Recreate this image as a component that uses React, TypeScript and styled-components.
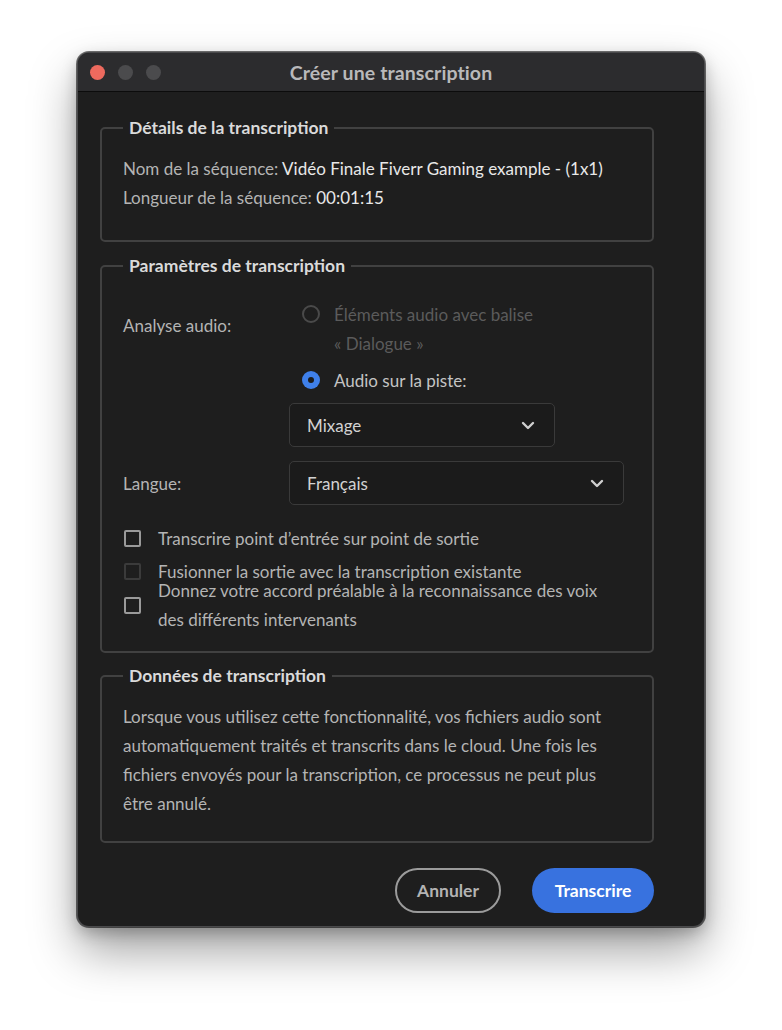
import { createGlobalStyle } from "styled-components";
import styled from "styled-components";

const GlobalStyle = createGlobalStyle`
	html, body {
		margin: 0;
		background: #ffffff;
	}
	body {
		font-family: Lato, "Liberation Sans", sans-serif;
		-webkit-font-smoothing: antialiased;
	}
	* {
		box-sizing: border-box;
	}
`;

const Stage = styled.div`
	width: 782px;
	height: 1030px;
	padding: 53px 0 0 78px;
	overflow: hidden;
`;

const Window = styled.div`
	width: 626px;
	height: 873px;
	background: #1e1e1e;
	border-radius: 11px;
	overflow: hidden;
	display: flex;
	flex-direction: column;
	box-shadow:
		0 0 0 1px #4a4a4c,
		0 0 0 2px rgba(0, 0, 0, 0.55),
		0 24px 48px rgba(0, 0, 0, 0.38),
		0 6px 16px rgba(0, 0, 0, 0.25);
`;

const TitleBar = styled.div`
	height: 39px;
	flex: none;
	background: #2c2c2e;
	border-bottom: 1px solid #0c0c0c;
	display: grid;
	grid-template-columns: 1fr auto 1fr;
	align-items: center;
`;

const Lights = styled.div`
	display: flex;
	gap: 13px;
	padding-left: 12px;
`;

const Light = styled.span<{ $color: string }>`
	width: 15px;
	height: 15px;
	border-radius: 50%;
	background: ${(p) => p.$color};
`;

const Title = styled.div`
	font-size: 19.5px;
	font-weight: 700;
	color: #b9b9ba;
	letter-spacing: 0.1px;
`;

const Body = styled.div`
	flex: 1;
	padding: 26px 50px 0 22px;
	display: flex;
	flex-direction: column;
`;

const Section = styled.fieldset<{ $pt: number; $pb: number; $mt?: number }>`
	margin: ${(p) => p.$mt ?? 0}px 0 0;
	min-width: 0;
	border: 2px solid #414141;
	border-radius: 5px;
	padding: ${(p) => p.$pt}px 20px ${(p) => p.$pb}px 21px;
	color: #b4b4b4;
	font-size: 17px;
	line-height: 29px;
`;

const Legend = styled.legend`
	padding: 0 6px;
	margin-left: 0;
	font-size: 17.5px;
	font-weight: 700;
	line-height: 20px;
	color: #dadada;
`;

const Line = styled.div`
	white-space: nowrap;
`;

const Value = styled.span`
	color: #e8e8e8;
`;

const FormRow = styled.div<{ $center?: boolean; $mt?: number }>`
	display: grid;
	grid-template-columns: 166px 1fr;
	align-items: ${(p) => (p.$center ? "center" : "start")};
	margin-top: ${(p) => p.$mt ?? 0}px;
`;

const FieldLabel = styled.div<{ $mt?: number }>`
	margin-top: ${(p) => p.$mt ?? 0}px;
	color: #b4b4b4;
`;

const Options = styled.div`
	display: flex;
	flex-direction: column;
	gap: 8px;
`;

const RadioOption = styled.div<{ $disabled?: boolean }>`
	display: flex;
	align-items: flex-start;
	gap: 14px;
	padding-left: 13px;
	color: ${(p) => (p.$disabled ? "#5b5b5b" : "#c4c4c4")};
`;

const RadioDot = styled.span<{ $checked?: boolean }>`
	flex: none;
	width: 18px;
	height: 18px;
	margin-top: 5px;
	border-radius: 50%;
	border: ${(p) => (p.$checked ? "none" : "2px solid #4a4a4a")};
	background: ${(p) => (p.$checked ? "#3f80ea" : "transparent")};
	display: flex;
	align-items: center;
	justify-content: center;

	&::after {
		content: "";
		display: ${(p) => (p.$checked ? "block" : "none")};
		width: 6px;
		height: 6px;
		border-radius: 50%;
		background: #1c1c1c;
	}
`;

const Select = styled.div<{ $width: number }>`
	width: ${(p) => p.$width}px;
	height: 44px;
	border: 1px solid #3a3a3a;
	border-radius: 5px;
	background: #1b1b1b;
	display: flex;
	align-items: center;
	justify-content: space-between;
	padding: 0 19px 0 17px;
	color: #d2d2d2;
`;

const CheckRow = styled.div<{ $mt: number }>`
	display: flex;
	align-items: center;
	gap: 17px;
	margin-top: ${(p) => p.$mt}px;
	padding-left: 1px;
	color: #b4b4b4;
	white-space: nowrap;
`;

const Box = styled.span<{ $disabled?: boolean }>`
	flex: none;
	width: 17px;
	height: 17px;
	border-radius: 2px;
	border: 2px solid ${(p) => (p.$disabled ? "#3b3b3b" : "#9a9a9a")};
`;

const Footer = styled.div`
	display: flex;
	justify-content: flex-end;
	gap: 31px;
	margin-top: 25px;
`;

const Button = styled.button<{ $primary?: boolean; $width: number }>`
	width: ${(p) => p.$width}px;
	height: 45px;
	border-radius: 23px;
	font-family: inherit;
	font-size: 17.5px;
	font-weight: 700;
	cursor: pointer;
	border: ${(p) => (p.$primary ? "none" : "2px solid #9b9b9b")};
	background: ${(p) => (p.$primary ? "#3872df" : "transparent")};
	color: ${(p) => (p.$primary ? "#ffffff" : "#b3b3b3")};
`;

function Chevron() {
	return (
		<svg width="14" height="9" viewBox="0 0 14 9" fill="none">
			<path
				d="M2 2l5 5 5-5"
				stroke="#cfcfcf"
				strokeWidth="2.4"
				strokeLinecap="round"
				strokeLinejoin="round"
			/>
		</svg>
	);
}

export default function App() {
	return (
		<Stage>
			<GlobalStyle />
			<Window>
				<TitleBar>
					<Lights>
						<Light $color="#ed6a5e" />
						<Light $color="#4b4b4d" />
						<Light $color="#4b4b4d" />
					</Lights>
					<Title>Créer une transcription</Title>
					<div />
				</TitleBar>

				<Body>
					<Section $pt={16} $pb={28}>
						<Legend>Détails de la transcription</Legend>
						<Line>
							Nom de la séquence: <Value>Vidéo Finale Fiverr Gaming example - (1x1)</Value>
						</Line>
						<Line>
							Longueur de la séquence: <Value>00:01:15</Value>
						</Line>
					</Section>

					<Section $pt={24} $pb={17} $mt={14}>
						<Legend>Paramètres de transcription</Legend>
						<FormRow>
							<FieldLabel $mt={11}>Analyse audio:</FieldLabel>
							<Options>
								<RadioOption $disabled>
									<RadioDot />
									<span>
										Éléments audio avec balise
										<br />« Dialogue »
									</span>
								</RadioOption>
								<RadioOption>
									<RadioDot $checked />
									<span>Audio sur la piste:</span>
								</RadioOption>
								<Select $width={266}>
									<span>Mixage</span>
									<Chevron />
								</Select>
							</Options>
						</FormRow>
						<FormRow $center $mt={14}>
							<FieldLabel>Langue:</FieldLabel>
							<Select $width={335}>
								<span>Français</span>
								<Chevron />
							</Select>
						</FormRow>
						<CheckRow $mt={19}>
							<Box />
							<span>Transcrire point d’entrée sur point de sortie</span>
						</CheckRow>
						<CheckRow $mt={4}>
							<Box $disabled />
							<span>Fusionner la sortie avec la transcription existante</span>
						</CheckRow>
						<CheckRow $mt={-10}>
							<Box />
							<span>
								Donnez votre accord préalable à la reconnaissance des voix
								<br />
								des différents intervenants
							</span>
						</CheckRow>
					</Section>

					<Section $pt={16} $pb={23} $mt={13}>
						<Legend>Données de transcription</Legend>
						<Line>Lorsque vous utilisez cette fonctionnalité, vos fichiers audio sont</Line>
						<Line>automatiquement traités et transcrits dans le cloud. Une fois les</Line>
						<Line>fichiers envoyés pour la transcription, ce processus ne peut plus</Line>
						<Line>être annulé.</Line>
					</Section>

					<Footer>
						<Button $width={106}>Annuler</Button>
						<Button $primary $width={122}>
							Transcrire
						</Button>
					</Footer>
				</Body>
			</Window>
		</Stage>
	);
}
